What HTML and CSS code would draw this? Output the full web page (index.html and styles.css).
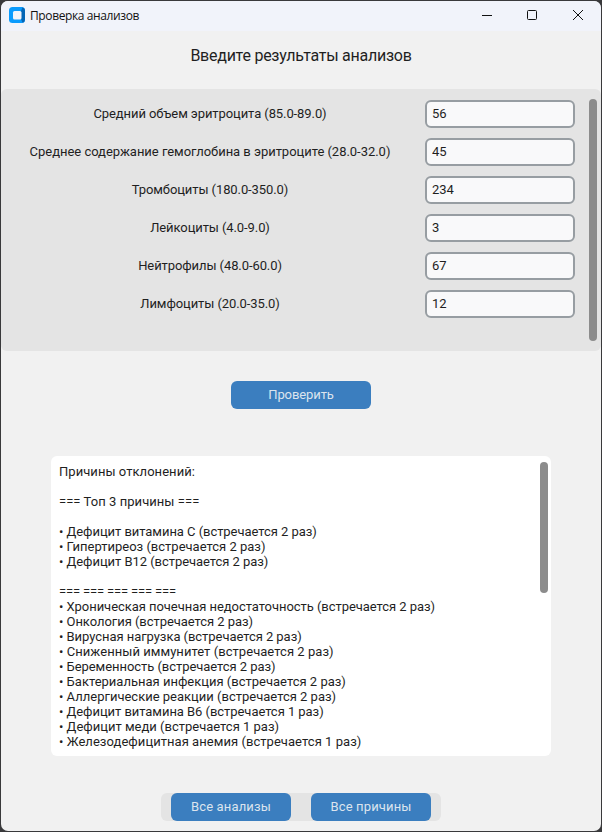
FILE: index.html
```html
<!DOCTYPE html>
<html lang="ru">
<head>
<meta charset="utf-8">
<title>Проверка анализов</title>
<link rel="stylesheet" href="styles.css">
</head>
<body>
<div class="window">
  <header class="titlebar">
    <svg class="app-icon" width="16" height="16" viewBox="0 0 16 16">
      <rect width="16" height="16" rx="3.5" fill="#0a9bfd"/>
      <path d="M12 4 13.500 .2Q16 1 16 3.500V12.500Q16 15 13.500 15.800L12 12Z" fill="#0565b5"/>
      <rect x="4" y="4" width="8.500" height="8.500" rx="1.5" fill="#f3f4fa"/>
    </svg>
    <span class="caption">Проверка анализов</span>
    <svg class="controls" width="102" height="12" viewBox="0 0 102 12" fill="none" stroke="#111" stroke-width="1">
      <path d="M0 6.500H10"/>
      <rect x="45.500" y="1.500" width="9" height="9" rx="1"/>
      <path d="M91 1 101 11M101 1 91 11"/>
    </svg>
  </header>
  <h1 class="heading">Введите результаты анализов</h1>
  <section class="panel">
    <div class="fields">
      <label class="label" for="f1">Средний объем эритроцита (85.0-89.0)</label><input class="entry" id="f1" value="56">
      <label class="label long" for="f2">Среднее содержание гемоглобина в эритроците (28.0-32.0)</label><input class="entry" id="f2" value="45">
      <label class="label" for="f3">Тромбоциты (180.0-350.0)</label><input class="entry" id="f3" value="234">
      <label class="label" for="f4">Лейкоциты (4.0-9.0)</label><input class="entry" id="f4" value="3">
      <label class="label" for="f5">Нейтрофилы (48.0-60.0)</label><input class="entry" id="f5" value="67">
      <label class="label" for="f6">Лимфоциты (20.0-35.0)</label><input class="entry" id="f6" value="12">
    </div>
    <div class="thumb panel-thumb"></div>
  </section>
  <button class="button check">Проверить</button>
  <section class="results">
    <div class="report">
      <p class="loose">Причины отклонений:</p>
      <p></p>
      <p class="loose">=== Топ 3 причины ===</p>
      <p></p>
      <p class="tight">• Дефицит витамина C (встречается 2 раз)</p>
      <p>• Гипертиреоз (встречается 2 раз)</p>
      <p class="tight">• Дефицит B12 (встречается 2 раз)</p>
      <p></p>
      <p class="rule">=== === === === ===</p>
      <p class="tight">• Хроническая почечная недостаточность (встречается 2 раз)</p>
      <p class="tight">• Онкология (встречается 2 раз)</p>
      <p class="tight">• Вирусная нагрузка (встречается 2 раз)</p>
      <p class="loose">• Сниженный иммунитет (встречается 2 раз)</p>
      <p class="tight">• Беременность (встречается 2 раз)</p>
      <p>• Бактериальная инфекция (встречается 2 раз)</p>
      <p>• Аллергические реакции (встречается 2 раз)</p>
      <p class="tight">• Дефицит витамина B6 (встречается 1 раз)</p>
      <p>• Дефицит меди (встречается 1 раз)</p>
      <p class="loose">• Железодефицитная анемия (встречается 1 раз)</p>
    </div>
    <div class="thumb results-thumb"></div>
  </section>
  <footer class="actions">
    <button class="button">Все анализы</button>
    <button class="button">Все причины</button>
  </footer>
</div>
</body>
</html>
```
FILE: styles.css
```css
* { box-sizing: border-box; }
body {
  margin: 0;
  padding: 1px;
  height: 832px;
  background: #39393b;
  font-family: Roboto, "Liberation Sans", sans-serif;
  font-size: 13px;
  color: #1f1f1f;
  overflow: hidden;
}
.window {
  width: 600px;
  height: 830px;
  display: flex;
  flex-direction: column;
  align-items: center;
  background: #f1f1f1;
  border-radius: 7px;
  overflow: hidden;
}
.titlebar {
  width: 100%;
  height: 30px;
  display: flex;
  align-items: center;
  padding: 0 17px 0 8px;
  background: #f1f3fa;
  flex: none;
}
.app-icon { margin-top: -2px; }
.caption {
  margin-left: 5px;
  font: 12px/16px "Open Sans", "Noto Sans", sans-serif;
  letter-spacing: -0.38px;
  color: #111;
}
.controls { margin-left: auto; margin-top: -2px; }
.heading {
  margin: 0;
  height: 58px;
  padding-top: 15px;
  font-size: 16px;
  line-height: 20px;
  letter-spacing: -0.25px;
  font-weight: 400;
  flex: none;
}
.panel {
  width: 600px;
  height: 262px;
  display: flex;
  justify-content: space-between;
  padding: 10px 4px 0 19px;
  background: #e4e4e4;
  border-radius: 6px;
  flex: none;
}
.fields {
  display: grid;
  grid-template-columns: 380px 150px;
  grid-auto-rows: 28px;
  row-gap: 10px;
  column-gap: 25px;
  padding-top: 1px;
}
.label { line-height: 28px; text-align: center; white-space: nowrap; letter-spacing: -0.09px; }
.label.long { letter-spacing: -0.03px; }
.entry {
  width: 150px;
  height: 28px;
  padding: 0 5px 2px;
  border: 2px solid #979da2;
  border-radius: 6px;
  background: #f9f9fa;
  font: inherit;
  color: inherit;
}
.thumb { width: 8px; border-radius: 4px; background: #8c8c8c; flex: none; }
.panel-thumb { height: 242px; }
.button {
  width: 120px;
  height: 28px;
  padding: 0 0 2px;
  border: 0;
  border-radius: 6px;
  background: #3b7ebf;
  color: #dce4ee;
  font: inherit;
  letter-spacing: 0.15px;
}
.check { width: 140px; margin-top: 30px; flex: none; letter-spacing: -0.1px; }
.results {
  width: 500px;
  height: 300px;
  margin-top: 47px;
  padding: 6px 3px 0 8px;
  display: flex;
  justify-content: space-between;
  background: #fff;
  border-radius: 6px;
  flex: none;
}
.report { padding-top: 2px; }
.report p { margin: 0; height: 15px; line-height: 15px; white-space: nowrap; }
.report .tight { letter-spacing: -0.05px; }
.report .loose { letter-spacing: 0.05px; }
.report .rule { letter-spacing: -0.16px; }
.results-thumb { height: 131px; }
.actions {
  width: 280px;
  height: 28px;
  margin-top: 37px;
  padding: 0 10px;
  display: flex;
  justify-content: space-between;
  background: #e4e4e4;
  border-radius: 6px;
  flex: none;
}
```
